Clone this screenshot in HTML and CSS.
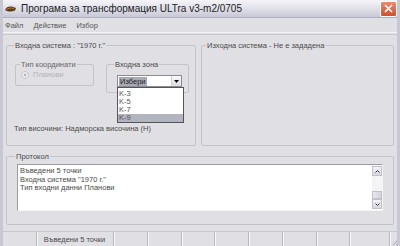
FILE: index.html
```html
<!DOCTYPE html>
<html lang="bg">
<head>
    <meta charset="UTF-8">
    <title>Програма за трансформация ULTra v3-m2/0705</title>
    <link rel="stylesheet" href="styles.css">
</head>
<body>

    <div class="window">
        <!-- Title bar -->
        <div class="titlebar">
            <svg class="app-icon" width="13" height="8" viewBox="0 0 13 8">
                <path d="M1 5 C2 2 5 1 8 1.5 L12 3 L11 5.5 C8 7 4 7 1 5 Z" fill="#5a3a1a"/>
                <path d="M2 5 C4 3 7 2.5 10 3.5" stroke="#c08040" stroke-width="1" fill="none"/>
            </svg>
            <span class="title">Програма за трансформация ULTra v3-m2/0705</span>
            <div class="close-btn">
                <svg width="9" height="9" viewBox="0 0 9 9">
                    <path d="M1 1 L8 8 M8 1 L1 8" stroke="#fff" stroke-width="1.6"/>
                </svg>
            </div>
        </div>

        <!-- Menu -->
        <div class="menubar">
            <span>Файл</span>
            <span>Действие</span>
            <span>Избор</span>
        </div>

        <div class="client">
            <div class="top-row">
                <fieldset class="group group-in">
                    <legend>Входна система : "1970 г."</legend>
                    <div class="inner-row">
                        <fieldset class="group coord-type">
                            <legend>Тип координати</legend>
                            <label class="radio"><span class="radio-dot"></span>Планови</label>
                        </fieldset>
                        <fieldset class="group zone">
                            <legend>Входна зона</legend>
                            <div class="combo">
                                <span class="combo-text"><span class="sel">Избери</span></span>
                                <span class="combo-btn">
                                    <svg width="5" height="3" viewBox="0 0 5 3"><path d="M0 0 H5 L2.5 3 Z" fill="#000"/></svg>
                                </span>
                                <ul class="combo-list">
                                    <li>K-3</li>
                                    <li>K-5</li>
                                    <li>K-7</li>
                                    <li class="active">K-9</li>
                                </ul>
                            </div>
                        </fieldset>
                    </div>
                    <p class="height-type">Тип височини: Надморска височина (H)</p>
                </fieldset>

                <fieldset class="group group-out">
                    <legend>Изходна система - Не е зададена</legend>
                </fieldset>
            </div>

            <fieldset class="group protocol">
                <legend>Протокол</legend>
                <div class="log">
                    <div class="log-lines">
                        <div>Въведени 5 точки</div>
                        <div>Входна система "1970 г."</div>
                        <div>Тип входни данни Планови</div>
                    </div>
                    <div class="scrollbar">
                        <span class="sb-btn">
                            <svg width="5" height="3" viewBox="0 0 5 3"><path d="M0.5 2.5 L2.5 0.5 L4.5 2.5" stroke="#333" fill="none"/></svg>
                        </span>
                        <span class="sb-track"></span>
                        <span class="sb-thumb"></span>
                        <span class="sb-btn">
                            <svg width="5" height="3" viewBox="0 0 5 3"><path d="M0.5 0.5 L2.5 2.5 L4.5 0.5" stroke="#333" fill="none"/></svg>
                        </span>
                    </div>
                </div>
            </fieldset>
        </div>

        <!-- Status bar -->
        <div class="statusbar">
            <span class="panel p-first"></span>
            <span class="panel p-text">Въведени 5 точки</span>
            <span class="panel"></span>
            <span class="panel"></span>
            <span class="panel"></span>
            <span class="panel"></span>
            <span class="panel"></span>
            <span class="panel"></span>
            <span class="panel"></span>
            <span class="panel p-last"></span>
            <span class="grip">
                <svg width="9" height="9" viewBox="0 0 9 9">
                    <path d="M8 2 L2 8 M8 5 L5 8" stroke="#a0a0a8" stroke-width="1"/>
                </svg>
            </span>
        </div>
    </div>

</body>
</html>
```

FILE: styles.css
```css
body {
    margin: 0;
    padding: 0;
    font-family: "Liberation Sans", Arial, sans-serif;
    background-color: #e0dfe3;
    color: #4a4a4a;
}
.window {
    width: 400px;
    height: 246px;
    box-sizing: border-box;
    background-color: #e0dfe3;
    border-left: 3px solid #c8c8d4;
    border-right: 3px solid #c8c8d4;
    display: flex;
    flex-direction: column;
    overflow: hidden;
}
.titlebar {
    height: 17px;
    margin: 0 -3px;
    padding: 0 3px;
    display: flex;
    align-items: center;
    background: linear-gradient(#f4f4f8, #dcdce6 60%, #c8c8d6);
    border-bottom: 1px solid #b0b0c0;
}
.app-icon {
    margin-left: 1px;
    margin-right: 4px;
}
.title {
    font-size: 10px;
    color: #222;
    flex-grow: 1;
}
.close-btn {
    width: 15px;
    height: 14px;
    border-radius: 2px;
    border: 1px solid #fff;
    background: linear-gradient(#e88a70, #d0502e);
    display: flex;
    align-items: center;
    justify-content: center;
}
.menubar {
    height: 14px;
    display: flex;
    align-items: center;
    font-size: 7.5px;
    color: #555;
    padding-left: 2px;
    border-bottom: 1px solid #f4f4f6;
}
.menubar span {
    margin-right: 10px;
}
.client {
    flex-grow: 1;
    padding: 0 3px;
    border-top: 1px solid #c8c8cc;
    margin-top: 1px;
}
.group {
    border: 1px solid #c4c4c8;
    border-radius: 2px;
    margin: 0;
    padding: 0;
    min-width: 0;
}
.group legend {
    font-size: 7.5px;
    padding: 0 1px;
    margin-left: 4px;
}
.top-row {
    display: flex;
    gap: 5px;
    margin-top: 6px;
}
.group-in {
    width: 190px;
    height: 105px;
    box-sizing: border-box;
    padding: 0 6px 0 8px;
}
.group-in > legend {
    margin-left: -1px;
}
.group-out {
    flex-grow: 1;
    height: 105px;
    box-sizing: border-box;
}
.inner-row {
    display: flex;
    gap: 12px;
    margin-top: 10px;
    align-items: flex-start;
}
.coord-type {
    width: 79px;
    height: 26px;
    box-sizing: border-box;
    padding: 1px 5px;
}
.coord-type legend {
    color: #666;
    margin-left: -1px;
}
.radio {
    display: flex;
    align-items: center;
    font-size: 7.5px;
    color: #b4b4b8;
}
.radio-dot {
    width: 6px;
    height: 6px;
    border-radius: 50%;
    border: 1px solid #c8c8cc;
    background: radial-gradient(#b8b8bc 30%, #f0f0f0 40%);
    margin-right: 4px;
}
.zone {
    width: 83px;
    height: 33px;
    box-sizing: border-box;
    padding: 6px 6px 0 10px;
}
.zone legend {
    margin-left: -3px;
}
.combo {
    position: relative;
    height: 12px;
    border: 1px solid #8c8c98;
    background-color: #fff;
    display: flex;
    align-items: center;
    width: 65px;
    box-sizing: border-box;
}
.combo-text {
    flex-grow: 1;
    font-size: 7.5px;
    padding-left: 1px;
}
.sel {
    background-color: #a8aab8;
    color: #222;
    padding: 0 1px;
}
.combo-btn {
    width: 9px;
    height: 10px;
    display: flex;
    align-items: center;
    justify-content: center;
    background: linear-gradient(#fafafa, #dcdce2);
    border-left: 1px solid #d0d0d4;
}
.combo-list {
    position: absolute;
    left: -1px;
    top: 11px;
    width: 65px;
    margin: 0;
    padding: 2px 0 0 0;
    list-style: none;
    background-color: #fff;
    border: 1px solid #555;
    font-size: 7.5px;
    line-height: 8px;
    color: #555;
}
.combo-list li {
    padding-left: 1px;
}
.combo-list .active {
    background-color: #b2b4bf;
}
.height-type {
    font-size: 7.5px;
    margin: 31px 0 0 -1px;
}
.protocol {
    margin-top: 6px;
    height: 73px;
    box-sizing: border-box;
    padding: 3px 10px 0 10px;
}
.protocol legend {
    margin-left: -2px;
}
.log {
    height: 45px;
    display: flex;
    background-color: #fff;
    border: 1px solid #9c9ca4;
    border-right-color: #f4f4f4;
    border-bottom-color: #f4f4f4;
}
.log-lines {
    flex-grow: 1;
    font-size: 7.5px;
    line-height: 8.5px;
    padding: 2px 0 0 2px;
}
.scrollbar {
    width: 10px;
    display: flex;
    flex-direction: column;
    background-color: #f4f4f6;
    margin: 1px 0;
}
.sb-btn {
    height: 10px;
    display: flex;
    align-items: center;
    justify-content: center;
    background: linear-gradient(#f4f4f6, #d6d6de);
    border: 1px solid #c0c0c8;
    box-sizing: border-box;
}
.sb-track {
    flex-grow: 1;
}
.sb-thumb {
    height: 8px;
    background: linear-gradient(90deg, #e8e8ec, #d4d4dc);
    border: 1px solid #c0c0c8;
    box-sizing: border-box;
}
.statusbar {
    height: 14px;
    margin: 0 -3px;
    display: flex;
    border-top: 1px solid #c8c8cc;
    font-size: 7.5px;
}
.panel {
    width: 32px;
    border-right: 1px solid #b8b8c0;
    box-shadow: 1px 0 0 #f8f8f8;
    margin-right: 1px;
    display: flex;
    align-items: center;
}
.p-first {
    width: 36px;
}
.p-text {
    width: 77px;
    padding-left: 6px;
    box-sizing: border-box;
}
.p-last {
    width: 38px;
}
.grip {
    flex-grow: 1;
    display: flex;
    justify-content: flex-end;
    align-items: flex-end;
}
```
